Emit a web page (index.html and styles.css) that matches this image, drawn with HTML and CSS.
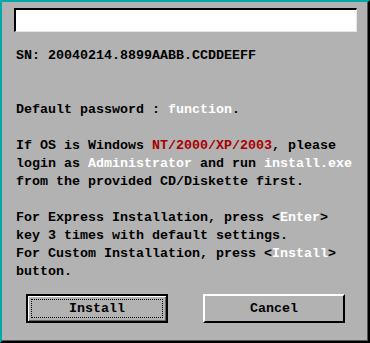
FILE: index.html
```html
<!DOCTYPE html>
<html lang="en">
<head>
    <meta charset="UTF-8">
    <title>Setup</title>
    <link rel="stylesheet" href="styles.css">
</head>
<body>
    <div class="window">
        <div class="field"></div>
<pre class="message">SN: 20040214.8899AABB.CCDDEEFF


Default password : <span class="hl">function</span>.

If OS is Windows <span class="warn">NT/2000/XP/2003</span>, please
login as <span class="hl">Administrator</span> and run <span class="hl">install.exe</span>
from the provided CD/Diskette first.

For Express Installation, press &lt;<span class="hl">Enter</span>&gt;
key 3 times with default settings.
For Custom Installation, press &lt;<span class="hl">Install</span>&gt;
button.</pre>
        <div class="buttons">
            <button class="btn btn-default"><span class="focus">Install</span></button>
            <button class="btn">Cancel</button>
        </div>
    </div>
</body>
</html>
```

FILE: styles.css
```css
html, body {
    margin: 0;
    background-color: #b2b2b2;
}

.window {
    width: 370px;
    height: 343px;
    box-sizing: border-box;
    background-color: #b2b2b2;
    border-top: 2px solid #00a8a8;
    border-left: 2px solid #00a8a8;
    border-right: 2px solid #000;
    border-bottom: 2px solid #000;
    box-shadow: inset -1px -1px 0 #555;
    font-family: "Liberation Mono", "DejaVu Sans Mono", monospace;
    font-size: 13.33px;
    font-weight: bold;
    color: #000;
    display: flex;
    flex-direction: column;
}

.field {
    margin: 6px 11px 0 12px;
    height: 24px;
    box-sizing: border-box;
    background-color: #fff;
    border-top: 2px solid #000;
    border-left: 2px solid #000;
    border-right: 1px solid #e6e6e6;
    border-bottom: 1px solid #e6e6e6;
}

.message {
    margin: 15px 0 0 14px;
    font: inherit;
    line-height: 18px;
    white-space: pre;
}

.hl {
    color: #fff;
}

.warn {
    color: #a80000;
}

.buttons {
    display: flex;
    gap: 35px;
    margin: 13px 0 0 24px;
}

.btn {
    width: 142px;
    height: 29px;
    padding: 0;
    box-sizing: border-box;
    background-color: #b2b2b2;
    font: inherit;
    color: #000;
    border: 2px solid;
    border-color: #fff #000 #000 #fff;
    display: flex;
    align-items: center;
    justify-content: center;
}

.btn-default {
    border-color: #000;
    box-shadow: inset 1px 1px 0 #fff, inset -1px -1px 0 #666;
    padding: 3px;
}

.focus {
    flex: 1;
    align-self: stretch;
    border: 1px dotted #000;
    display: flex;
    align-items: center;
    justify-content: center;
}
```
